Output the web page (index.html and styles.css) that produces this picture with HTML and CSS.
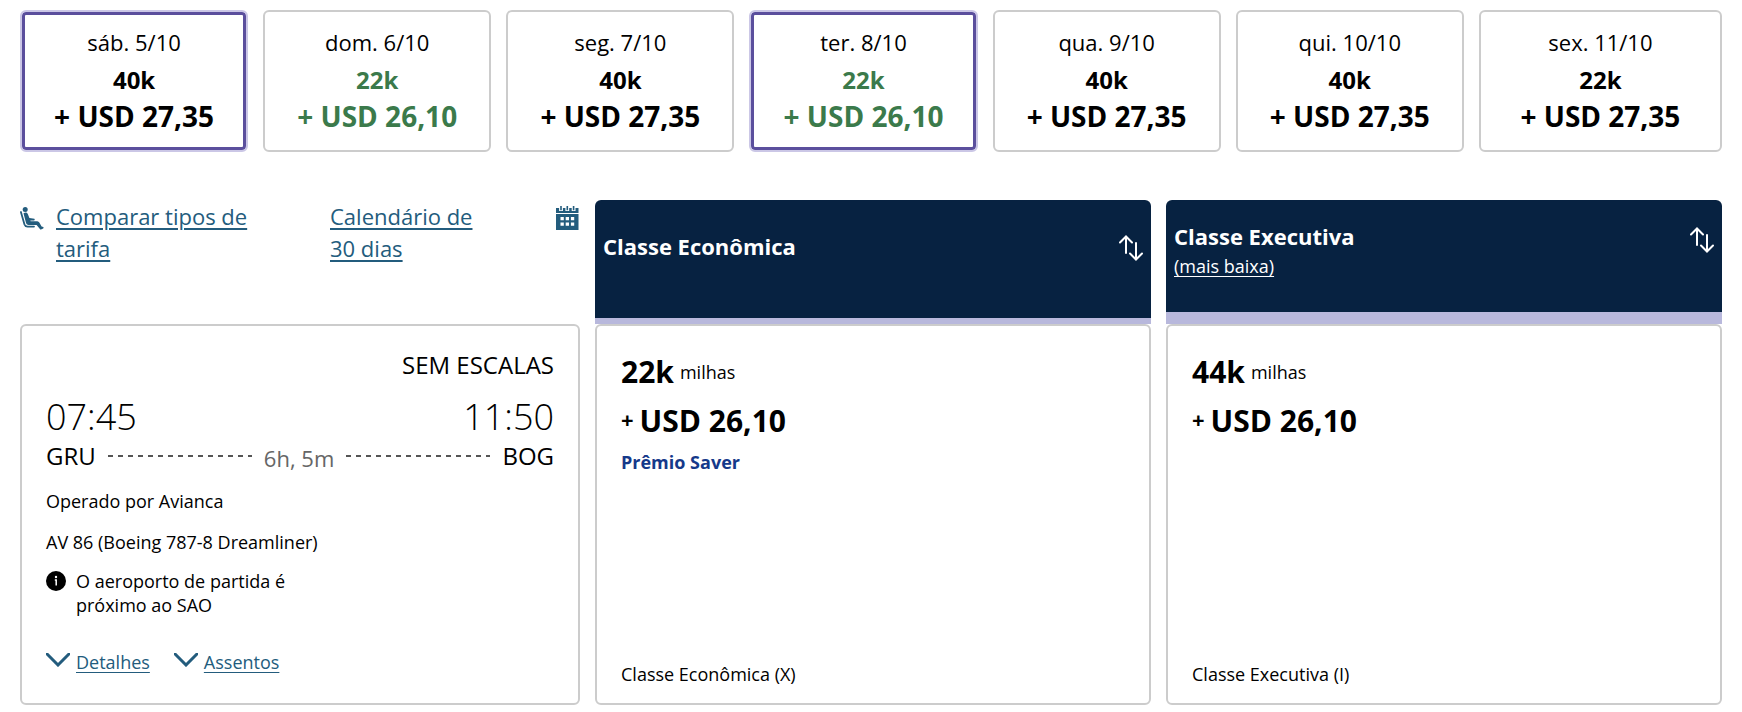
FILE: index.html
```
<!DOCTYPE html>
<html lang="pt-BR">
<head>
    <meta charset="UTF-8">
    <meta name="viewport" content="width=device-width, initial-scale=1.0">
    <title>Escolha seu voo</title>
    <link rel="stylesheet" href="styles.css">
</head>
<body>
    <div class="days">
        <button type="button" class="day selected">
            <span class="date">sáb. 5/10</span>
            <span class="miles">40k</span>
            <span class="money">+ USD 27,35</span>
        </button>
        <button type="button" class="day lowest">
            <span class="date">dom. 6/10</span>
            <span class="miles">22k</span>
            <span class="money">+ USD 26,10</span>
        </button>
        <button type="button" class="day">
            <span class="date">seg. 7/10</span>
            <span class="miles">40k</span>
            <span class="money">+ USD 27,35</span>
        </button>
        <button type="button" class="day selected lowest">
            <span class="date">ter. 8/10</span>
            <span class="miles">22k</span>
            <span class="money">+ USD 26,10</span>
        </button>
        <button type="button" class="day">
            <span class="date">qua. 9/10</span>
            <span class="miles">40k</span>
            <span class="money">+ USD 27,35</span>
        </button>
        <button type="button" class="day">
            <span class="date">qui. 10/10</span>
            <span class="miles">40k</span>
            <span class="money">+ USD 27,35</span>
        </button>
        <button type="button" class="day">
            <span class="date">sex. 11/10</span>
            <span class="miles">22k</span>
            <span class="money">+ USD 27,35</span>
        </button>
    </div>

    <div class="results">
        <div class="tools">
            <div class="tool">
                <svg width="24" height="24" viewBox="0 0 24 24" aria-hidden="true">
                    <circle cx="5.2" cy="3.6" r="2.5" fill="currentColor"/>
                    <path d="M0.900 6L4.500 18.500Q5.200 20.600 7.500 20.600H14" fill="none" stroke="currentColor" stroke-width="1.800" stroke-linecap="round"/>
                    <path d="M3.500 7.300Q6.500 5.600 7.800 8L9.400 12L14.400 12.700Q15.300 13.500 14.200 14.400L10.400 14.600L10.600 15.200L17.300 15.200Q18.700 15.400 19.300 16.400L21.600 20.600L23.300 21Q24 21.800 23.200 22.600L21 23.600Q20.200 23.500 19.700 22.700L16.600 18.900L8.500 19.100Q6.700 18.900 6.100 17.200Z" fill="currentColor"/>
                </svg>
                <a href="#">Comparar tipos de tarifa</a>
            </div>
            <div class="tool calendar">
                <a href="#">Calendário de 30 dias</a>
                <svg width="24" height="24" viewBox="0 0 24 24" aria-hidden="true">
                    <path d="M0 2H22.500V7H0ZM0 8H22.500V24H0Z" fill="currentColor"/>
                    <path d="M5 0V5M11.300 0V5M17.600 0V5" stroke="#fff" stroke-width="3.800"/>
                    <path d="M5 0V4.200M11.300 0V4.200M17.600 0V4.200" stroke="currentColor" stroke-width="1.600"/>
                    <path d="M4.500 11H7.800V14.300H4.500ZM9.700 11H13V14.300H9.700ZM14.900 11H18.200V14.300H14.900ZM4.500 16.500H7.800V19.800H4.500ZM9.700 16.500H13V19.800H9.700ZM14.900 16.500H18.200V19.800H14.900Z" fill="#fff"/>
                </svg>
            </div>
        </div>

        <div class="cabin">
            <h2>Classe Econômica</h2>
            <button type="button" class="sort" aria-label="Ordenar Classe Econômica">
                <svg width="24" height="26" viewBox="0 0 24 26" aria-hidden="true">
                    <path d="M7 18V2M1 7.500L7 1.500L13 7.500M17 8V24M11 18.500L17 24.500L23 18.500"/>
                </svg>
            </button>
        </div>
        <div class="cabin active">
            <div>
                <h2>Classe Executiva</h2>
                <a href="#">(mais baixa)</a>
            </div>
            <button type="button" class="sort" aria-label="Ordenar Classe Executiva">
                <svg width="24" height="26" viewBox="0 0 24 26" aria-hidden="true">
                    <path d="M7 18V2M1 7.500L7 1.500L13 7.500M17 8V24M11 18.500L17 24.500L23 18.500"/>
                </svg>
            </button>
        </div>

        <div class="card">
            <div class="stops">SEM ESCALAS</div>
            <div class="times">
                <span>07:45</span>
                <span>11:50</span>
            </div>
            <div class="route">
                <span>GRU</span>
                <span class="dashes"></span>
                <span class="duration">6h, 5m</span>
                <span class="dashes"></span>
                <span>BOG</span>
            </div>
            <p class="operator">Operado por Avianca</p>
            <p class="aircraft">AV 86 (Boeing 787-8 Dreamliner)</p>
            <div class="notice">
                <svg width="20" height="20" viewBox="0 0 20 20" aria-hidden="true">
                    <circle cx="10" cy="10" r="10" fill="#000"/>
                    <circle cx="10" cy="6" r="1.200" fill="#fff"/>
                    <path d="M8.800 9H10.200V14.500" fill="none" stroke="#fff" stroke-width="1.500"/>
                </svg>
                <p>O aeroporto de partida é próximo ao SAO</p>
            </div>
            <div class="more">
                <a href="#">
                    <svg width="24" height="14" viewBox="0 0 24 14" aria-hidden="true"><path d="M1 1L12 12L23 1"/></svg>
                    <span>Detalhes</span>
                </a>
                <a href="#">
                    <svg width="24" height="14" viewBox="0 0 24 14" aria-hidden="true"><path d="M1 1L12 12L23 1"/></svg>
                    <span>Assentos</span>
                </a>
            </div>
        </div>

        <div class="card fare">
            <div class="fare-miles"><strong>22k</strong> <span>milhas</span></div>
            <div class="fare-money"><span>+</span> <strong>USD 26,10</strong></div>
            <div class="award">Prêmio Saver</div>
            <div class="fare-class">Classe Econômica (X)</div>
        </div>
        <div class="card fare">
            <div class="fare-miles"><strong>44k</strong> <span>milhas</span></div>
            <div class="fare-money"><span>+</span> <strong>USD 26,10</strong></div>
            <div class="fare-class">Classe Executiva (I)</div>
        </div>
    </div>
</body>
</html>
```
FILE: styles.css
```
* {
    box-sizing: border-box;
}
body {
    font-family: "Open Sans", "Noto Sans", sans-serif;
    font-size: 18px;
    line-height: 24px;
    color: #000000;
    background-color: #ffffff;
    margin: 0;
    padding: 10px 20px 6px;
}
h2, p {
    margin: 0;
}
button {
    font-family: inherit;
    cursor: pointer;
}
a {
    color: #235c7d;
    text-underline-offset: 3px;
}

/* day picker */
.days {
    display: grid;
    grid-template-columns: repeat(7, 1fr);
}
.day {
    display: flex;
    flex-direction: column;
    align-items: center;
    margin-right: 15px;
    padding: 12px 0 18px;
    background-color: #ffffff;
    border: 2px solid #cccccc;
    border-radius: 6px;
    color: #000000;
}
.day:last-child {
    margin-right: 0;
}
.day.selected {
    border-color: #cbc7e6;
    box-shadow: inset 0 0 0 3px #5b4f9d;
}
.day.lowest .miles,
.day.lowest .money {
    color: #3b7a4b;
}
.date {
    font-size: 22px;
    line-height: 36px;
}
.miles {
    font-size: 24px;
    font-weight: 700;
    line-height: 40px;
}
.money {
    font-size: 28px;
    font-weight: 700;
    line-height: 32px;
}

/* results */
.results {
    display: grid;
    grid-template-columns: 560fr 556fr 556fr;
    column-gap: 15px;
    margin-top: 48px;
}
.tools {
    display: flex;
    justify-content: space-between;
    color: #235c7d;
    font-size: 22px;
    line-height: 32px;
}
.tool {
    display: flex;
    align-items: flex-start;
    gap: 12px;
    width: 250px;
}
.tool svg {
    flex: none;
    margin-top: 6px;
}
.tool.calendar {
    justify-content: space-between;
}
.calendar a {
    width: 160px;
}
.cabin {
    display: flex;
    align-items: center;
    justify-content: space-between;
    min-height: 124px;
    padding: 0 8px 22px;
    background-color: #072241;
    border-bottom: 6px solid #b8b8dc;
    border-radius: 6px 6px 0 0;
    color: #ffffff;
}
.cabin.active {
    align-items: flex-start;
    padding-top: 20px;
    border-bottom-width: 12px;
}
.cabin h2 {
    font-size: 22px;
    line-height: 32px;
}
.cabin > h2 {
    padding-bottom: 4px;
}
.cabin a {
    display: block;
    color: #ffffff;
    line-height: 28px;
}
.sort {
    padding: 0;
    border: none;
    background: none;
    line-height: 0;
}
.cabin.active .sort {
    margin-top: 7px;
}
.sort path {
    fill: none;
    stroke: #ffffff;
    stroke-width: 2;
    stroke-linecap: round;
}
.card {
    display: flex;
    flex-direction: column;
    padding: 24px 24px 29px;
    border: 2px solid #cccccc;
    border-radius: 6px;
}
.stops {
    font-size: 24px;
    line-height: 30px;
    text-align: right;
}
.times {
    display: flex;
    justify-content: space-between;
    margin-top: 18px;
    font-size: 36px;
    font-weight: 300;
    line-height: 38px;
}
.route {
    display: flex;
    align-items: center;
    gap: 12px;
    font-size: 24px;
    line-height: 36px;
}
.dashes {
    flex: 1;
    height: 2px;
    background: repeating-linear-gradient(to right, #555555 0 5px, transparent 5px 10px);
}
.duration {
    padding-top: 4px;
    color: #666666;
    font-size: 22px;
}
.operator {
    margin-top: 13px;
}
.aircraft {
    margin-top: 17px;
}
.notice {
    display: flex;
    gap: 10px;
    width: 260px;
    margin-top: 15px;
}
.notice svg {
    flex: none;
    margin-top: 2px;
}
.more {
    display: flex;
    gap: 24px;
    margin-top: 33px;
}
.more a {
    display: flex;
    gap: 6px;
    text-decoration: none;
}
.more span {
    text-decoration: underline;
}
.more svg {
    margin-top: 3px;
}
.more path {
    fill: none;
    stroke: #235c7d;
    stroke-width: 3;
    stroke-linecap: round;
}

/* fares */
.card.fare {
    padding-top: 22px;
    padding-bottom: 17px;
}
.fare-miles, .fare-money {
    display: flex;
    align-items: center;
    gap: 6px;
    line-height: 48px;
}
.fare-miles strong, .fare-money strong {
    font-size: 30px;
}
.fare-money {
    line-height: 46px;
}
.fare-money span {
    padding-bottom: 3px;
    font-size: 22px;
    font-weight: 700;
}
.award {
    color: #15398a;
    font-weight: 700;
    line-height: 34px;
}
.fare-class {
    margin-top: auto;
}
```
